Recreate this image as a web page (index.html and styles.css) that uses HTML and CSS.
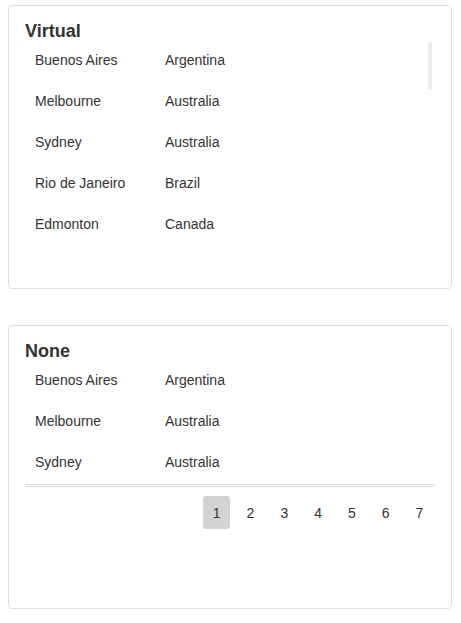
FILE: index.html
```html
<!DOCTYPE html>
<html>
<head>
<meta charset="utf-8">
<link rel="stylesheet" href="styles.css">
</head>
<body>
<div class="page">
  <section class="card">
    <h3 class="card-title">Virtual</h3>
    <div class="viewport">
      <div class="list">
        <div class="row"><span class="cell city">Buenos Aires</span><span class="cell">Argentina</span></div>
        <div class="row"><span class="cell city">Melbourne</span><span class="cell">Australia</span></div>
        <div class="row"><span class="cell city">Sydney</span><span class="cell">Australia</span></div>
        <div class="row"><span class="cell city">Rio de Janeiro</span><span class="cell">Brazil</span></div>
        <div class="row"><span class="cell city">Edmonton</span><span class="cell">Canada</span></div>
      </div>
      <div class="scroll-thumb"></div>
    </div>
  </section>

  <section class="card">
    <h3 class="card-title">None</h3>
    <div class="list">
      <div class="row"><span class="cell city">Buenos Aires</span><span class="cell">Argentina</span></div>
      <div class="row"><span class="cell city">Melbourne</span><span class="cell">Australia</span></div>
      <div class="row"><span class="cell city">Sydney</span><span class="cell">Australia</span></div>
    </div>
    <nav class="pager">
      <span class="page-btn active">1</span>
      <span class="page-btn">2</span>
      <span class="page-btn">3</span>
      <span class="page-btn">4</span>
      <span class="page-btn">5</span>
      <span class="page-btn">6</span>
      <span class="page-btn">7</span>
    </nav>
  </section>
</div>
</body>
</html>
```

FILE: styles.css
```css
html, body {
  background: #ffffff;
}

body {
  margin: 5px 9px 0 8px;
  font-family: "Liberation Sans", Arial, sans-serif;
  font-size: 14px;
  color: #333333;
}

.page {
  display: flex;
  flex-direction: column;
  gap: 36px;
}

.card {
  box-sizing: border-box;
  height: 284px;
  border: 1px solid #dddddd;
  border-radius: 4px;
  padding: 16px;
  display: flex;
  flex-direction: column;
}

.card-title {
  margin: 0;
  font-size: 18px;
  line-height: 18px;
  font-weight: bold;
  color: #333333;
}

.viewport {
  position: relative;
  height: 205px;
}

.scroll-thumb {
  position: absolute;
  top: 2px;
  right: 3px;
  width: 4px;
  height: 47px;
  background: #ececec;
}

.list {
  display: flex;
  flex-direction: column;
}

.row {
  box-sizing: border-box;
  display: flex;
  flex: none;
  height: 41px;
  padding-bottom: 2px;
  align-items: center;
}

.cell {
  padding: 0 10px;
  white-space: nowrap;
}

.city {
  box-sizing: border-box;
  width: 130px;
}

.pager {
  margin-top: 1px;
  border-top: 3px double #dddddd;
  padding: 9px 2px 0 0;
  display: flex;
  justify-content: flex-end;
  gap: 6.8px;
}

.page-btn {
  width: 27px;
  height: 33px;
  border-radius: 3px;
  display: flex;
  align-items: center;
  justify-content: center;
  color: #333333;
}

.page-btn.active {
  background: #d3d3d3;
}
```
